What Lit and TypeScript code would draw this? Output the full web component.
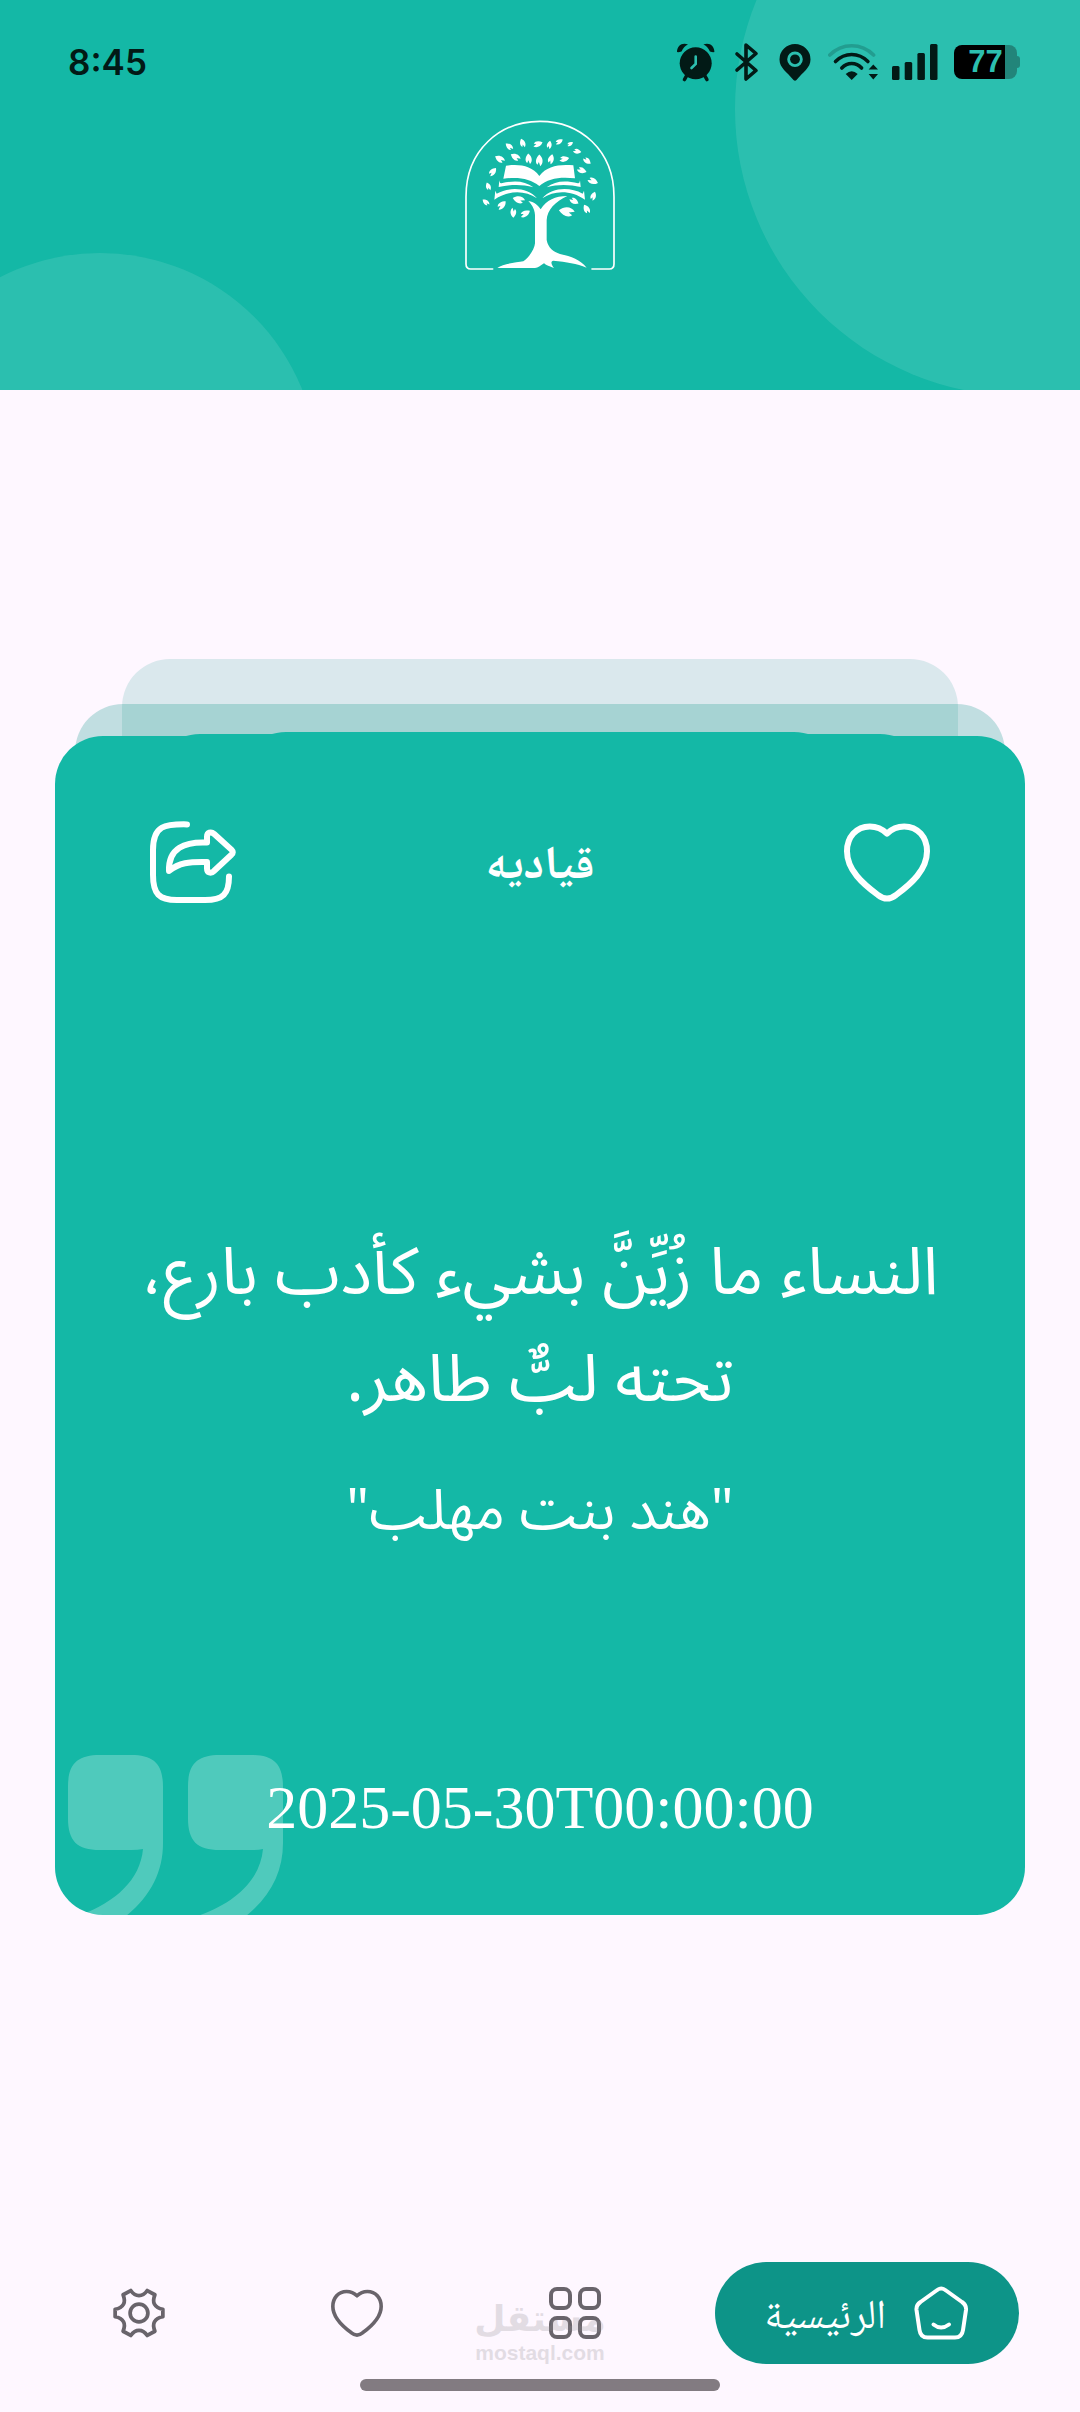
import { LitElement, css, html, svg } from "lit";
import { customElement, property } from "lit/decorators.js";

/** Leaves of the logo tree: x, y, rotation, scale */
const leaves = [
  [208, 140, -50, 1.1],
  [248, 130, -20, 1.1],
  [293, 132, 70, 1.2],
  [328, 135, 10, 1],
  [357, 125, 60, 1],
  [390, 132, 60, 0.8],
  [411, 154, 100, 1],
  [441, 182, 130, 1.1],
  [180, 177, -60, 1.3],
  [227, 171, -60, 1.3],
  [266, 177, -5, 1.3],
  [298, 182, 0, 1.4],
  [333, 178, 15, 1.2],
  [372, 177, 80, 1.2],
  [158, 216, 40, 1.2],
  [425, 211, 110, 1.2],
  [145, 260, -20, 1],
  [458, 243, 110, 1.3],
  [138, 307, -50, 1],
  [460, 289, 20, 1.1],
  [185, 316, 45, 1.3],
  [237, 299, -75, 1.5],
  [220, 338, 180, 1.2],
  [255, 341, 60, 1.3],
  [381, 335, -80, 1.9],
  [402, 303, 120, 1.2],
  [440, 328, -30, 1.2],
];

const heart =
  "M12 4.9C10.8 3.7 9.4 3.1 7.7 3.1C4.3 3.1 2 5.8 2 9.3C2 14 6 17.5 9.7 20.2C11.2 21.4 12.8 21.4 14.3 20.2C18 17.5 22 14 22 9.3C22 5.8 19.7 3.1 16.3 3.1C14.6 3.1 13.2 3.7 12 4.9Z";

/** Phone status bar */
@customElement("status-bar")
export class StatusBar extends LitElement {
  @property() time = "";
  @property({ type: Number }) battery = 0;

  override render() {
    return html`
      <time>${this.time}</time>
      <div class="icons">
        <svg width="42" height="40" viewBox="0 0 42 40">
          <circle cx="20.7" cy="21.3" r="16" />
          <path d="M2 10C2 4 7 0 13 2.500Q9 4 6.500 9.500Q3.500 10.500 2 10Z" />
          <path d="M39.400 10C39.400 4 34.400 0 28.400 2.500Q32.400 4 34.900 9.500Q37.900 10.500 39.400 10Z" />
          <path class="line" d="M12 33L9.500 37.500M29.400 33L31.900 37.500" />
          <path class="hands" d="M20.700 14.500V22L16.500 26" />
        </svg>
        <svg width="31" height="40" viewBox="0 0 31 40">
          <path class="line" d="M6 12L25 28.500L15 37V3L25 11.500L6 28" />
        </svg>
        <svg width="38" height="40" viewBox="0 0 38 40">
          <path
            fill-rule="evenodd"
            d="M19 2A15.500 15.500 0 0 1 34.500 17.500C34.500 26 27 30 20.500 38Q19 39.500 17.500 38C11 30 3.500 26 3.500 17.500A15.500 15.500 0 0 1 19 2ZM19 9.500A7.800 7.800 0 1 0 19 25.100A7.800 7.800 0 1 0 19 9.500Z"
          />
          <circle cx="19" cy="17.300" r="4.900" />
        </svg>
        <svg width="50" height="40" viewBox="0 0 50 40">
          <path class="line faint" d="M1.800 13Q11 3.700 23.700 3.700T45.600 13" />
          <path class="line" d="M7.500 19.500Q14.500 12.500 23.700 12.500T39.900 19.500" />
          <path class="line" d="M13.800 26Q18 21.500 23.700 21.500T33.600 26" />
          <path d="M17.700 32Q23.700 26.500 29.700 32L23.700 38Z" />
          <path d="M45.300 22.500L50 27.500H40.600ZM45.300 37.500L50 32H40.600Z" />
        </svg>
        <svg width="48" height="40" viewBox="0 0 48 40">
          <rect y="24" width="7.500" height="14" rx="1.500" />
          <rect x="12.700" y="20" width="7.500" height="18" rx="1.500" />
          <rect x="25.400" y="11" width="7.500" height="27" rx="1.500" />
          <rect x="38" y="2" width="7.500" height="36" rx="1.500" />
        </svg>
        <div class="battery">${this.battery}</div>
      </div>
    `;
  }

  static override styles = css`
    :host {
      display: flex;
      align-items: center;
      justify-content: space-between;
      padding: 42px 60px 0 68px;
      color: #021a16;
    }

    time {
      font: 600 35px/40px Inter, sans-serif;
    }

    .icons {
      display: flex;
      align-items: center;
      gap: 14px;
    }

    svg {
      fill: currentColor;
    }

    .line {
      fill: none;
      stroke: currentColor;
      stroke-width: 3.6;
      stroke-linecap: round;
      stroke-linejoin: round;
    }

    .faint {
      opacity: 0.2;
    }

    .hands {
      fill: none;
      stroke: #2cbfaf;
      stroke-width: 2.6;
      stroke-linecap: round;
    }

    .battery {
      position: relative;
      width: 63px;
      margin-right: 3px;
      border-radius: 8px;
      background: linear-gradient(90deg, #000 51px, #22857a 51px);
      color: #2cbfaf;
      font: 700 31px/34px "Liberation Sans", sans-serif;
      text-align: center;
    }

    .battery::after {
      content: "";
      position: absolute;
      left: 100%;
      top: 11px;
      width: 3px;
      height: 12px;
      border-radius: 0 3px 3px 0;
      background: #22857a;
    }
  `;
}

/** Line of wisdom on a stack of cards */
@customElement("quote-card")
export class QuoteCard extends LitElement {
  @property() category = "";
  @property() author = "";
  @property() date = "";

  override render() {
    return html`
      <div class="layer far"></div>
      <div class="layer middle"></div>
      <div class="layer third"></div>
      <div class="layer second"></div>
      <article>
        <svg class="mark" width="215" height="160" viewBox="0 0 215 160">
          ${[0, 120].map(
            (x) => svg`
              <path
                transform="translate(${x} 0)"
                d="M32 0H63C86 0 95 9 95 32V88C95 120 80 146 50 167L0 164C42 152 72 128 75 94Q70 95 63 95H32C9 95 0 86 0 63V32C0 9 9 0 32 0Z"
              />
            `
          )}
        </svg>
        <header>
          <button aria-label="أضف إلى المفضلة">
            <svg width="96" height="96" viewBox="0 0 24 24"><path d=${heart} /></svg>
          </button>
          <h2>${this.category}</h2>
          <button aria-label="مشاركة">
            <svg width="96" height="96" viewBox="0 0 24 24">
              <path
                d="M10.500 2.600C5 2.500 2 2.800 2 9V15.200C2 20 3.500 21.500 8 21.500H15C19.500 21.500 21 20 21 15.600"
              />
              <path
                d="M15.500 7.150C10 6.900 5.800 8.500 6 14.250C8.500 12.200 11 11.900 15.500 12V13.600C15.500 14.700 16.500 15 17.300 14.200L21.600 10.200Q22.300 9.600 21.600 8.900L17.300 5C16.500 4.300 15.500 4.600 15.500 5.700Z"
              />
            </svg>
          </button>
        </header>
        <blockquote>
          <p><slot></slot></p>
          <footer>"${this.author}"</footer>
        </blockquote>
        <time dir="ltr">${this.date}</time>
      </article>
    `;
  }

  static override styles = css`
    :host {
      display: block;
      position: relative;
      margin: 0 55px;
      padding-top: 77px;
      color: #fff;
    }

    .layer {
      position: absolute;
      height: 200px;
      border-radius: 48px;
      background: #14b8a6;
    }

    .far {
      top: 0;
      left: 67px;
      right: 67px;
      background: #0d9488;
      opacity: 0.15;
    }

    .middle {
      top: 45px;
      left: 20px;
      right: 20px;
      background: #0d9488;
      opacity: 0.25;
    }

    .third {
      top: 73px;
      left: 183px;
      right: 183px;
    }

    .second {
      top: 75px;
      left: 97px;
      right: 97px;
    }

    article {
      position: relative;
      display: flex;
      flex-direction: column;
      overflow: hidden;
      padding: 78px 76px 68px;
      border-radius: 48px;
      background: #14b8a6;
      text-align: center;
    }

    .mark {
      position: absolute;
      left: 13px;
      bottom: 0;
      fill: #fff;
      opacity: 0.25;
    }

    header {
      display: flex;
      align-items: center;
      justify-content: space-between;
      padding: 0 14px;
    }

    button {
      display: flex;
      padding: 0;
      border: 0;
      background: none;
      color: inherit;
    }

    button svg {
      fill: none;
      stroke: currentColor;
      stroke-width: 1.5;
      stroke-linecap: round;
      stroke-linejoin: round;
    }

    h2 {
      margin: 0;
      padding-top: 12px;
      font: 700 47px/80px "Noto Naskh Arabic", "DejaVu Sans", serif;
    }

    blockquote {
      margin: 310px 0 202px;
      font: 400 66px/107px "Noto Sans Arabic", "DejaVu Sans", sans-serif;
    }

    p {
      margin: 0;
    }

    footer {
      margin-top: 24px;
      font-size: 56px;
    }

    time {
      position: relative;
      font: 400 62px/80px "Liberation Serif", serif;
    }
  `;
}

@customElement("app-root")
export class AppRoot extends LitElement {
  override render() {
    return html`
      <header>
        <status-bar time="8:45" battery="77"></status-bar>
        <svg class="logo" width="150" height="150" viewBox="75 60 450 450">
          <path
            class="arch"
            d="M158 507H92Q78 507 78 492V290C78 150 180 64 300 64C420 64 522 150 522 290V492Q522 507 508 507H456"
          />
          <path
            d="M198 197C240 192 275 197 298 228C320 197 360 192 400 196L405 235C360 230 325 235 298 258C270 235 235 230 190 236Z"
          />
          <path d="M178 241C180 250 180 249 184 250C225 240 255 243 280 262C245 252 210 254 176 261Z" />
          <path d="M420 241C418 250 418 249 414 250C375 240 345 243 320 262C355 252 390 254 422 261Z" />
          <path d="M166 272L170 281C210 260 262 262 291 295C255 270 205 270 163 299Z" />
          <path d="M432 272L428 281C388 260 336 262 307 295C343 270 393 270 435 299Z" />
          <path
            d="M265 303C285 305 297 320 302 328C320 300 345 288 382 288C345 305 322 330 320 360V420C325 445 340 455 360 462C395 470 420 478 440 503C410 490 380 486 340 482C330 484 335 495 342 504C325 498 318 495 312 490C300 498 295 503 285 504H172C190 490 230 488 250 484C270 470 284 445 285 430V345C284 325 272 310 265 303Z"
          />
          ${leaves.map(
            ([x, y, angle, scale]) => svg`
              <path
                transform="translate(${x} ${y}) rotate(${angle}) scale(${scale})"
                d="M0 -13C9 -5 9 6 2 12L-1 3L-4 9C-10 3 -7 -6 0 -13Z"
              />
            `
          )}
        </svg>
      </header>

      <main>
        <quote-card dir="rtl" category="قياديه" author="هند بنت مهلب" date="2025-05-30T00:00:00">
          النساء ما زُيِّنَّ بشيء كأدب بارع، تحته لبٌّ طاهر.
        </quote-card>
      </main>

      <nav dir="rtl">
        <a class="active" href="#home">
          <svg width="58" height="58" viewBox="0 0 58 58">
            <path
              d="M24.500 6.500Q29.200 2.500 34 6.500L50 18Q54.500 21 54 26L51 46Q50 53.500 43 53.500H15.500Q8.500 53.500 7.500 46L4.500 26Q4 21 8.500 18Z"
            />
            <path d="M21.500 40.500Q29 46.500 37 40.500" />
          </svg>
          <span>الرئيسية</span>
        </a>
        <a href="#categories" aria-label="الأقسام">
          <svg width="58" height="58" viewBox="0 0 58 58">
            <rect x="5" y="5" width="19" height="19" rx="6" />
            <rect x="34" y="5" width="19" height="19" rx="6" />
            <rect x="5" y="34" width="19" height="19" rx="6" />
            <rect x="34" y="34" width="19" height="19" rx="6" />
          </svg>
        </a>
        <a href="#favorites" aria-label="المفضلة">
          <svg class="heart" width="58" height="58" viewBox="0 0 24 24"><path d=${heart} /></svg>
        </a>
        <a href="#settings" aria-label="الإعدادات">
          <svg width="58" height="58" viewBox="-2 -2 62 62">
            <circle cx="29" cy="29" r="9.500" />
            <path
              d="M20.200 5Q24 10.500 29 10.500Q34 10.500 37.800 5L46 9.500Q43.500 16 45.500 19.500Q48 24 54.500 25V33Q48 34 45.500 38.500Q43.500 42 46 48.500L37.800 53Q34 47.500 29 47.500Q24 47.500 20.200 53L12 48.500Q14.500 42 12.500 38.500Q10 34 3.500 33V25Q10 24 12.500 19.500Q14.500 16 12 9.500Z"
            />
          </svg>
        </a>
        <div class="watermark">
          <b>مستقل</b>
          <span>mostaql.com</span>
        </div>
      </nav>
      <div class="handle"></div>
    `;
  }

  static override styles = css`
    :host {
      display: flex;
      flex-direction: column;
      min-height: 100vh;
      background: #fef7ff;
    }

    header {
      position: relative;
      overflow: hidden;
      padding-bottom: 120px;
      background: #14b8a6;
    }

    header::before,
    header::after {
      content: "";
      position: absolute;
      border-radius: 50%;
      background: #fff;
      opacity: 0.1;
    }

    header::before {
      top: -178px;
      right: -229px;
      width: 574px;
      height: 574px;
    }

    header::after {
      top: 253px;
      left: -118px;
      width: 436px;
      height: 436px;
    }

    status-bar {
      position: relative;
      z-index: 1;
    }

    .logo {
      display: block;
      margin: 38px auto 0;
      fill: #fff;
    }

    .arch {
      fill: none;
      stroke: #fff;
      stroke-width: 5;
      stroke-linecap: round;
    }

    main {
      flex: 1;
      display: flex;
      flex-direction: column;
      justify-content: center;
    }

    nav {
      position: relative;
      display: flex;
      align-items: center;
      padding: 78px 61px 15px 30px;
    }

    a {
      flex: 1;
      display: flex;
      align-items: center;
      justify-content: center;
      height: 102px;
      color: #69646b;
      text-decoration: none;
    }

    a svg {
      fill: none;
      stroke: currentColor;
      stroke-width: 4;
      stroke-linecap: round;
      stroke-linejoin: round;
    }

    a .heart {
      stroke-width: 1.5;
    }

    .active {
      flex: none;
      gap: 26px;
      margin-left: 31px;
      padding: 0 49px;
      border-radius: 51px;
      background: #0d9488;
      color: #fff;
      font: 400 41px/60px "Noto Naskh Arabic", "DejaVu Sans", serif;
    }

    .active span {
      padding-top: 12px;
    }

    .watermark {
      position: absolute;
      left: 50%;
      bottom: 14px;
      display: grid;
      justify-items: center;
      transform: translateX(-50%);
      color: #928d94;
      opacity: 0.25;
      font: 700 21px/24px "Liberation Sans", sans-serif;
      pointer-events: none;
    }

    .watermark b {
      font: 700 36px/44px "DejaVu Sans", sans-serif;
    }

    .handle {
      width: 360px;
      height: 12px;
      margin: 0 auto 21px;
      border-radius: 6px;
      background: #827b81;
    }
  `;
}

declare global {
  interface HTMLElementTagNameMap {
    "app-root": AppRoot;
    "quote-card": QuoteCard;
    "status-bar": StatusBar;
  }
}
